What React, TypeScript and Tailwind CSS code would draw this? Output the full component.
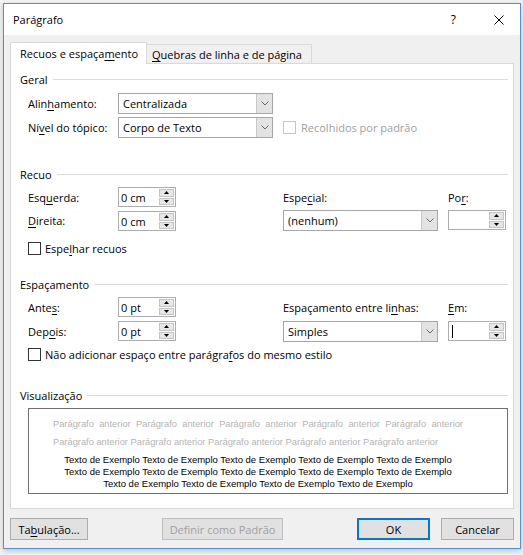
import React from "react";

function U({ children }: { children: React.ReactNode }) {
  return <span className="underline decoration-1 underline-offset-[2px]">{children}</span>;
}

function Chevron() {
  return (
    <svg width="8" height="5" viewBox="0 0 8 5">
      <path d="M0.5 0.5 L4 4 L7.5 0.5" fill="none" stroke="#6a6a6a" strokeWidth="1" />
    </svg>
  );
}

function Combo({ value }: { value: string }) {
  return (
    <div className="flex h-[21px] w-[155px] items-stretch border border-[#a6a6a6] bg-white">
      <div className="flex flex-1 items-center pl-[4px]">{value}</div>
      <div className="flex w-[16px] items-center justify-center border-l border-[#c9c9c9] bg-[#e3e3e3]">
        <Chevron />
      </div>
    </div>
  );
}

function Spin({ value, cursor }: { value?: string; cursor?: boolean }) {
  return (
    <div className="flex h-[20px] w-[58px] border border-[#abadb3] bg-white">
      <div className="flex flex-1 items-center pl-[2px]">
        {value}
        {cursor && <span className="ml-[1px] h-[13px] w-px bg-black" />}
      </div>
      <div className="flex w-[16px] flex-col gap-px py-px pr-px">
        <div className="flex flex-1 items-center justify-center border border-[#c4c4c4] bg-[#e6e6e6]">
          <svg width="5" height="3" viewBox="0 0 5 3">
            <path d="M0 3 L2.5 0 L5 3Z" fill="#000" />
          </svg>
        </div>
        <div className="flex flex-1 items-center justify-center border border-[#c4c4c4] bg-[#e6e6e6]">
          <svg width="5" height="3" viewBox="0 0 5 3">
            <path d="M0 0 L2.5 3 L5 0Z" fill="#000" />
          </svg>
        </div>
      </div>
    </div>
  );
}

function Header({ title }: { title: string }) {
  return (
    <div className="flex h-[16px] items-center gap-[5px]">
      <span>{title}</span>
      <div className="h-px flex-1 bg-[#dcdcdc]" />
    </div>
  );
}

function Check({ disabled }: { disabled?: boolean }) {
  return (
    <div
      className={
        disabled
          ? "h-[13px] w-[13px] shrink-0 border border-[#c6c6c6] bg-white"
          : "h-[13px] w-[13px] shrink-0 border border-[#333333] bg-white"
      }
    />
  );
}

function Btn({ children, w, ok, disabled }: { children: React.ReactNode; w: string; ok?: boolean; disabled?: boolean }) {
  let cls = "flex h-[22px] items-center justify-center bg-[#e1e1e1] border border-[#adadad] " + w;
  if (ok) cls = "flex h-[22px] items-center justify-center bg-[#e1e1e1] border-2 border-[#0078d7] " + w;
  if (disabled) cls = "flex h-[22px] items-center justify-center bg-[#e1e1e1] border border-[#bfbfbf] text-[#a0a0a0] " + w;
  return <div className={cls}>{children}</div>;
}

const words10 = ["Parágrafo", "anterior", "Parágrafo", "anterior", "Parágrafo", "anterior", "Parágrafo", "anterior", "Parágrafo", "anterior"];

export default function App() {
  return (
    <div className="h-[555px] w-[523px] overflow-hidden bg-[#f3f3f3] pl-[3px] pt-[3px] font-['Open_Sans',sans-serif] text-[11px] leading-[15px] text-black">
      <div className="flex h-[546px] w-[518px] flex-col border border-[#4b93d8] bg-[#f0f0f0] shadow-[0_2px_6px_rgba(0,0,0,0.2)]">
        {/* Title bar */}
        <div className="flex h-[31px] shrink-0 items-center bg-white pl-[9px]">
          <span>Parágrafo</span>
          <span className="ml-auto text-[12px]">?</span>
          <svg className="ml-[38px] mr-[16px]" width="10" height="10" viewBox="0 0 10 10">
            <path d="M0.5 0.5 L9.5 9.5 M9.5 0.5 L0.5 9.5" stroke="#000" strokeWidth="1" />
          </svg>
        </div>

        {/* Tabs */}
        <div className="flex items-end px-[6px] pt-[7px]">
          <div className="relative z-10 -mb-px flex h-[22px] w-[137px] items-center border border-b-0 border-[#d9d9d9] bg-white pl-[9px]">
            <span>
              Recuos e espaça<U>m</U>ento
            </span>
          </div>
          <div className="flex h-[19px] w-[165px] items-center border border-b-0 border-l-0 border-[#d9d9d9] bg-[#f0f0f0] pl-[5px]">
            <span>
              <U>Q</U>uebras de linha e de página
            </span>
          </div>
        </div>

        {/* Panel */}
        <div className="mx-[6px] flex h-[446px] flex-col border border-[#d9d9d9] bg-white pl-[9px] pr-[5px] pt-[7px]">
          <Header title="Geral" />
          <div className="ml-[8px] mt-[6px] flex items-center">
            <div className="w-[90px]">
              Alin<U>h</U>amento:
            </div>
            <Combo value="Centralizada" />
          </div>
          <div className="ml-[8px] mt-[3px] flex items-center">
            <div className="w-[90px]">
              Ní<U>v</U>el do tópico:
            </div>
            <Combo value="Corpo de Texto" />
            <div className="ml-[10px] flex items-center gap-[5px] text-[#a0a0a0]">
              <Check disabled />
              <span>Recolhidos por padrão</span>
            </div>
          </div>

          <div className="mt-[28px]">
            <Header title="Recuo" />
          </div>
          <div className="ml-[8px] mt-[5px] flex h-[20px] items-center">
            <div className="w-[90px]">
              Esq<U>u</U>erda:
            </div>
            <Spin value="0 cm" />
            <div className="ml-[107px] w-[155px]">
              Espe<U>c</U>ial:
            </div>
            <div className="ml-[10px]">
              Po<U>r</U>:
            </div>
          </div>
          <div className="ml-[8px] mt-[3px] flex items-start">
            <div className="flex h-[21px] w-[90px] items-center">
              <span>
                <U>D</U>ireita:
              </span>
            </div>
            <div className="pt-px">
              <Spin value="0 cm" />
            </div>
            <div className="ml-[107px]">
              <Combo value="(nenhum)" />
            </div>
            <div className="ml-[10px]">
              <Spin />
            </div>
          </div>
          <div className="ml-[8px] mt-[11px] flex h-[13px] items-center gap-[4px]">
            <Check />
            <span>
              Espe<U>l</U>har recuos
            </span>
          </div>

          <div className="mt-[21px]">
            <Header title="Espaçamento" />
          </div>
          <div className="ml-[8px] mt-[5px] flex h-[20px] items-center">
            <div className="w-[90px]">
              Ante<U>s</U>:
            </div>
            <Spin value="0 pt" />
            <div className="ml-[107px] w-[155px]">
              Espaçamento entre li<U>n</U>has:
            </div>
            <div className="ml-[10px]">
              <U>E</U>m:
            </div>
          </div>
          <div className="ml-[8px] mt-[4px] flex items-start">
            <div className="flex h-[20px] w-[90px] items-center">
              <span>
                Dep<U>o</U>is:
              </span>
            </div>
            <Spin value="0 pt" />
            <div className="ml-[107px]">
              <Combo value="Simples" />
            </div>
            <div className="ml-[10px]">
              <Spin cursor />
            </div>
          </div>
          <div className="ml-[8px] mt-[6px] flex h-[13px] items-center gap-[4px]">
            <Check />
            <span>
              Não adicionar espaço entre parágra<U>f</U>os do mesmo estilo
            </span>
          </div>

          <div className="mt-[26px]">
            <Header title="Visualização" />
          </div>
          <div className="ml-[8px] mt-[5px] h-[86px] overflow-hidden border border-[#6e6e6e] bg-white pl-[24px] pt-[9px] font-['Liberation_Sans',Arial,sans-serif] text-[9.3px] leading-[12px]">
            <div className="flex w-[410px] justify-between text-[#b4b4b4]">
              {words10.map((w, i) => (
                <span key={i}>{w}</span>
              ))}
            </div>
            <div className="mt-[6px] w-[410px] whitespace-nowrap text-[#b4b4b4]">
              Parágrafo anterior Parágrafo anterior Parágrafo anterior Parágrafo anterior Parágrafo anterior
            </div>
            <div className="mt-[6px] w-[410px] text-center text-[9.5px] text-black">
              <div className="whitespace-nowrap">Texto de Exemplo Texto de Exemplo Texto de Exemplo Texto de Exemplo Texto de Exemplo</div>
              <div className="whitespace-nowrap">Texto de Exemplo Texto de Exemplo Texto de Exemplo Texto de Exemplo Texto de Exemplo</div>
              <div className="whitespace-nowrap">Texto de Exemplo Texto de Exemplo Texto de Exemplo Texto de Exemplo</div>
            </div>
            <div className="mt-[2px] w-[410px] whitespace-nowrap text-[#c8c8c8]">
              Parágrafo seguinte Parágrafo seguinte Parágrafo seguinte Parágrafo seguinte Parágrafo seguinte
            </div>
          </div>
        </div>

        {/* Buttons */}
        <div className="mt-[9px] flex px-[6px]">
          <Btn w="w-[78px]">
            <span>
              Ta<U>b</U>ulação...
            </span>
          </Btn>
          <div className="ml-[74px]">
            <Btn w="w-[121px]" disabled>
              Definir como Padrão
            </Btn>
          </div>
          <div className="ml-[74px]">
            <Btn w="w-[73px]" ok>
              OK
            </Btn>
          </div>
          <div className="ml-[11px]">
            <Btn w="w-[73px]">Cancelar</Btn>
          </div>
        </div>
      </div>
    </div>
  );
}
